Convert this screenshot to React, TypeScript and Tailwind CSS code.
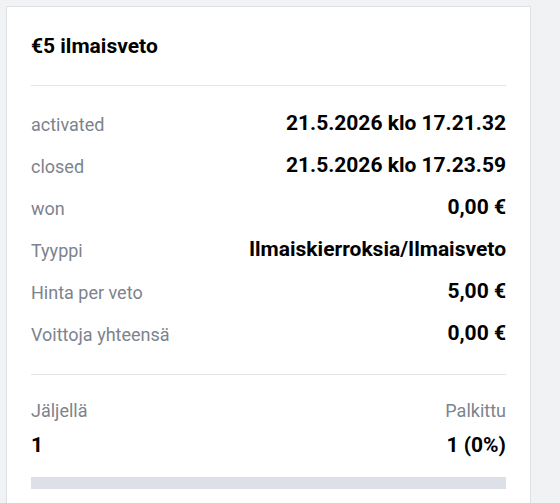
import React from "react";

const rows = [
  { label: "activated", value: "21.5.2026 klo 17.21.32" },
  { label: "closed", value: "21.5.2026 klo 17.23.59" },
  { label: "won", value: "0,00 €" },
  { label: "Tyyppi", value: "Ilmaiskierroksia/Ilmaisveto" },
  { label: "Hinta per veto", value: "5,00 €" },
  { label: "Voittoja yhteensä", value: "0,00 €" },
];

export default function App() {
  return (
    <div
      className="min-h-[503px] bg-[#f1f2f4] pl-[6px] pt-[6px] overflow-hidden"
      style={{ fontFamily: "Roboto, 'Liberation Sans', sans-serif" }}
    >
      <div className="w-[525px] h-[520px] border border-[#dde1e6] bg-white px-[24px]">
        {/* Header */}
        <h2 className="pt-[27px] pb-[27px] text-[21px] leading-[24px] font-bold text-black">
          €5 ilmaisveto
        </h2>
        <div className="h-px bg-[#e2e4e8]" />

        {/* Details */}
        <div className="pt-[17px] pb-[19px]">
          {rows.map((row) => (
            <div key={row.label} className="flex h-[42px] items-center justify-between">
              <span className="text-[18px] text-[#7d838d]">{row.label}</span>
              <span className="text-[21px] font-bold text-black">{row.value}</span>
            </div>
          ))}
        </div>
        <div className="h-px bg-[#e2e4e8]" />

        {/* Progress */}
        <div className="pt-[24px]">
          <div className="flex justify-between text-[18px] leading-[24px] text-[#7d838d]">
            <span>Jäljellä</span>
            <span>Palkittu</span>
          </div>
          <div className="mt-[10px] flex justify-between text-[21px] leading-[24px] font-bold text-black">
            <span>1</span>
            <span>1 (0%)</span>
          </div>
          <div className="mt-[20px] h-[12px] bg-[#dde0e7]" />
        </div>
      </div>
    </div>
  );
}
